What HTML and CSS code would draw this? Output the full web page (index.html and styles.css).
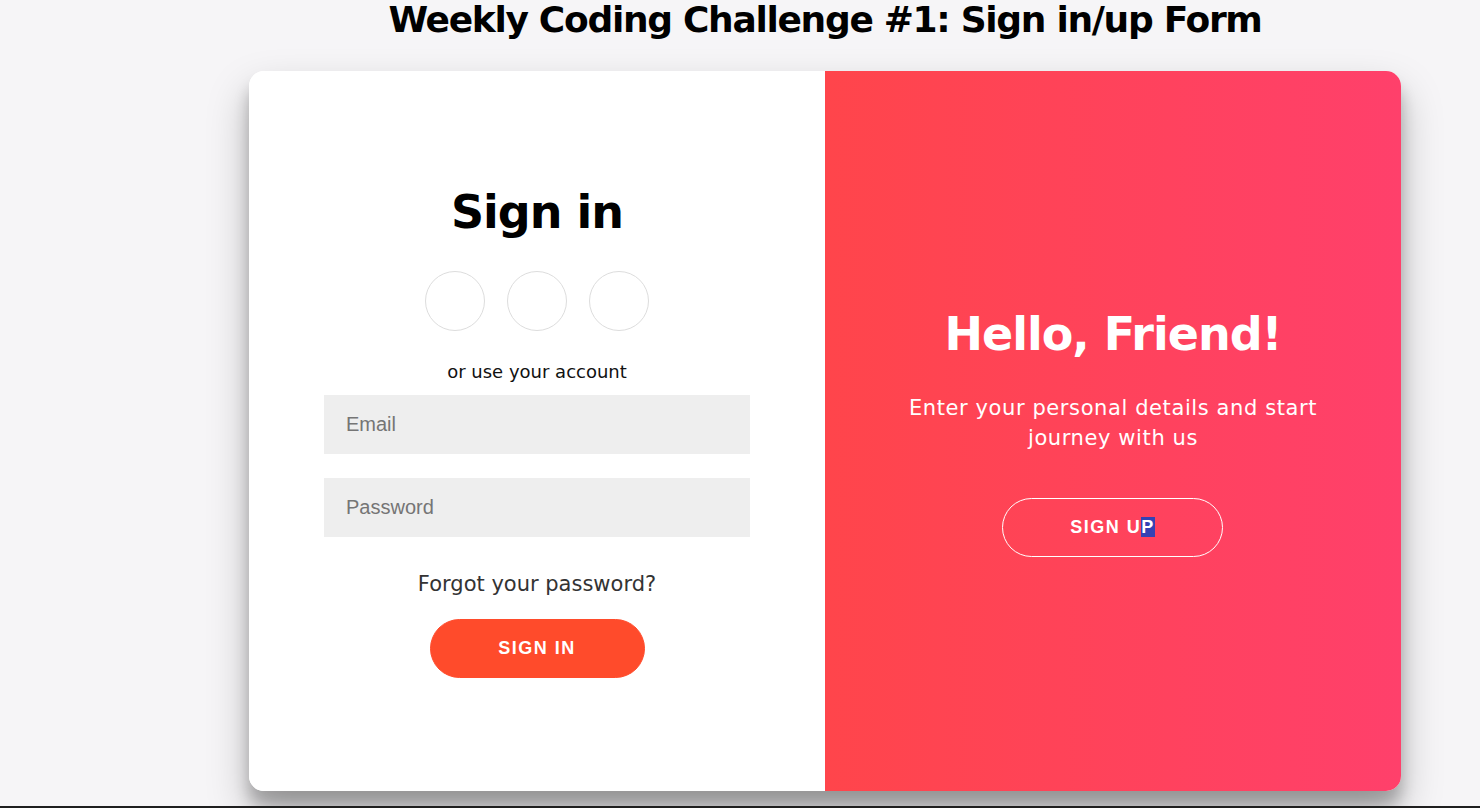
FILE: index.html
```html
<!DOCTYPE html>
<html lang="en">
<head>
<meta charset="utf-8">
<title>Sign in/up Form</title>
<link rel="stylesheet" href="styles.css">
</head>
<body>
<div class="stage">
  <h2 class="title">Weekly Coding Challenge #1: Sign in/up Form</h2>
  <div class="container">
    <form class="panel signin-panel">
      <h1 class="heading">Sign in</h1>
      <div class="social">
        <a class="social-link" href="#"></a>
        <a class="social-link" href="#"></a>
        <a class="social-link" href="#"></a>
      </div>
      <span class="hint">or use your account</span>
      <input class="field" type="email" placeholder="Email">
      <input class="field" type="password" placeholder="Password">
      <a class="forgot" href="#">Forgot your password?</a>
      <button class="btn" type="button">Sign In</button>
    </form>
    <div class="panel overlay-panel">
      <h1 class="heading heading-light">Hello, Friend!</h1>
      <p class="lead">Enter your personal details and start journey with us</p>
      <button class="btn ghost" type="button">Sign U<span class="sel">P</span></button>
    </div>
  </div>
</div>
<div class="bottom-line"></div>
</body>
</html>
```

FILE: styles.css
```css
* {
  box-sizing: border-box;
}

html, body {
  margin: 0;
  padding: 0;
}

body {
  width: 1480px;
  height: 808px;
  overflow: hidden;
  background: #f6f5f7;
  font-family: "DejaVu Sans", "Liberation Sans", sans-serif;
  color: #000;
}

.stage {
  width: 1152px;
  margin-left: 249px;
}

.title {
  margin: 0;
  font-size: 36px;
  line-height: 40px;
  font-weight: bold;
  letter-spacing: -1.3px;
  text-align: center;
  white-space: nowrap;
}

.container {
  margin-top: 31px;
  width: 1152px;
  height: 720px;
  display: flex;
  background: #fff;
  border-radius: 15px;
  overflow: hidden;
  box-shadow: 0 21px 42px rgba(0, 0, 0, 0.25), 0 15px 15px rgba(0, 0, 0, 0.22);
}

.panel {
  width: 576px;
  height: 720px;
  margin: 0;
  display: flex;
  flex-direction: column;
  align-items: center;
  justify-content: center;
  text-align: center;
}

.signin-panel {
  padding: 0 75px;
  background: #fff;
}

.heading {
  margin: 0;
  font-size: 46px;
  line-height: 57px;
  font-weight: bold;
  letter-spacing: -1px;
}

.heading-light {
  color: #fff;
}

.social {
  display: flex;
  gap: 22px;
  margin: 30px 0;
}

.social-link {
  display: block;
  width: 60px;
  height: 60px;
  border: 1px solid #dddddd;
  border-radius: 50%;
}

.hint {
  font-size: 18px;
  line-height: 22px;
  color: #111;
}

.field {
  display: block;
  width: 100%;
  height: 59px;
  margin: 12px 0;
  padding: 0 22px;
  border: none;
  background: #eeeeee;
  font-family: "Liberation Sans", Arial, sans-serif;
  font-size: 20px;
  color: #333;
  outline: none;
}

.field::placeholder {
  color: #757575;
}

.forgot {
  margin: 22.5px 0 22px;
  font-size: 21px;
  line-height: 25px;
  color: #333;
  text-decoration: none;
}

.btn {
  width: 215px;
  height: 59px;
  padding: 0;
  border: 1px solid #ff4b2b;
  border-radius: 30px;
  background: #ff4b2b;
  color: #fff;
  font-family: "Liberation Sans", Arial, sans-serif;
  font-size: 18px;
  font-weight: bold;
  letter-spacing: 1.5px;
  text-transform: uppercase;
  cursor: pointer;
}

.overlay-panel {
  padding: 0 60px;
  background: linear-gradient(to right, #ff454b, #ff406b);
  color: #fff;
}

.lead {
  margin: 30px 0 45px;
  font-size: 21px;
  line-height: 30px;
  letter-spacing: 0.6px;
  font-weight: normal;
}

.ghost {
  width: 221px;
  margin-right: 1px;
  background: transparent;
  border-color: #fff;
}

.sel {
  background: #3442b4;
}

.bottom-line {
  margin-top: 15px;
  width: 1480px;
  height: 2px;
  background: #1f1f1f;
}
```
